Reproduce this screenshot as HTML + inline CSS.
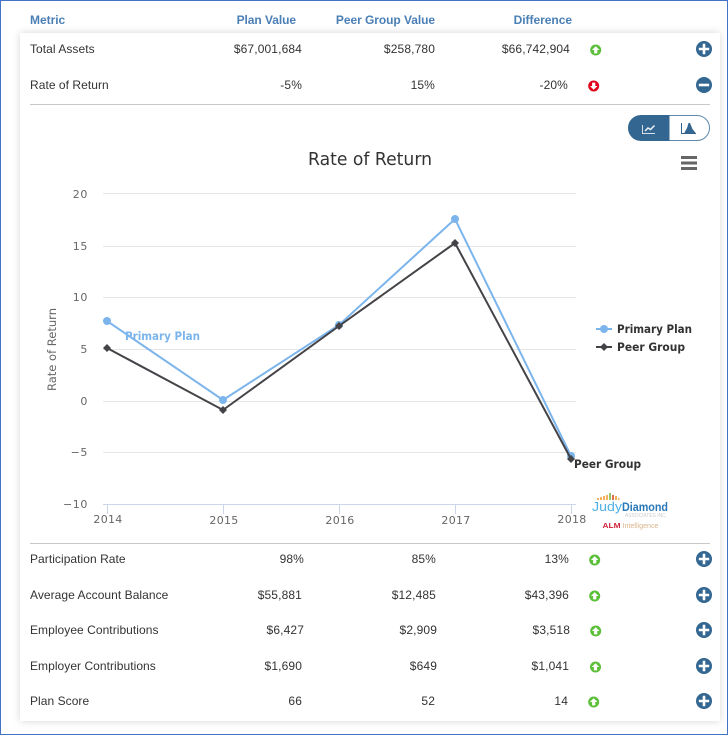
<!DOCTYPE html>
<html><head><meta charset="utf-8"><style>
html,body{margin:0;padding:0;background:#fff}
#p{position:relative;width:728px;height:735px;overflow:hidden;background:#fff;font-family:"Liberation Sans",Arial,sans-serif;font-size:12px;color:#333}
#b{position:absolute;left:0;top:0;width:726px;height:733px;border:1px solid #4472c4;}
#c{position:absolute;left:20px;top:33px;width:700px;height:688px;background:#fff;box-shadow:0 0 8px rgba(0,0,0,.16)}
.t{position:absolute;white-space:nowrap;line-height:14px;letter-spacing:.05px}
.r{text-align:right;letter-spacing:.13px}
.h{font-weight:bold;color:#4a7fb5;letter-spacing:-.03px}
svg{position:absolute;left:0;top:0}
</style></head><body><div id="p"><div id="b"></div><div id="c"></div>

<div class="t h" style="left:30px;top:13px">Metric</div>
<div class="t h r" style="right:432px;top:13px;letter-spacing:-.06px">Plan Value</div>
<div class="t h r" style="right:293px;top:13px;letter-spacing:-.06px">Peer Group Value</div>
<div class="t h r" style="right:156px;top:13px;letter-spacing:-.03px">Difference</div>

<div class="t" style="left:30px;top:42px">Total Assets</div>
<div class="t r" style="right:426px;top:42px">$67,001,684</div>
<div class="t r" style="right:293px;top:42px">$258,780</div>
<div class="t r" style="right:158px;top:42px">$66,742,904</div>

<div class="t" style="left:30px;top:78px">Rate of Return</div>
<div class="t r" style="right:426px;top:78px">-5%</div>
<div class="t r" style="right:293px;top:78px">15%</div>
<div class="t r" style="right:160px;top:78px">-20%</div>

<div class="t" style="left:30px;top:552px">Participation Rate</div>
<div class="t r" style="right:424px;top:552px">98%</div>
<div class="t r" style="right:292px;top:552px">85%</div>
<div class="t r" style="right:159px;top:552px">13%</div>

<div class="t" style="left:30px;top:588px">Average Account Balance</div>
<div class="t r" style="right:426px;top:588px">$55,881</div>
<div class="t r" style="right:292px;top:588px">$12,485</div>
<div class="t r" style="right:159px;top:588px">$43,396</div>

<div class="t" style="left:30px;top:623px">Employee Contributions</div>
<div class="t r" style="right:424px;top:623px">$6,427</div>
<div class="t r" style="right:291px;top:623px">$2,909</div>
<div class="t r" style="right:158px;top:623px">$3,518</div>

<div class="t" style="left:30px;top:659px">Employer Contributions</div>
<div class="t r" style="right:426px;top:659px">$1,690</div>
<div class="t r" style="right:291px;top:659px">$649</div>
<div class="t r" style="right:159px;top:659px">$1,041</div>

<div class="t" style="left:30px;top:694px">Plan Score</div>
<div class="t r" style="right:426px;top:694px">66</div>
<div class="t r" style="right:293px;top:694px">52</div>
<div class="t r" style="right:160px;top:694px">14</div>

<svg width="728" height="735" viewBox="0 0 728 735" font-family="'DejaVu Sans',sans-serif">
<defs>
<g id="plus"><circle r="8" fill="#336791"/><path d="M-5.200 0H5.200M0-5.200V5.200" stroke="#fff" stroke-width="2.600"/></g>
<g id="up"><circle r="5.500" fill="#5cbf3a"/><path d="M0-3.800L3.800 0H1.600V3.400H-1.600V0H-3.800Z" fill="#fff"/></g>
<g id="down"><circle r="5.500" fill="#e0001b"/><path d="M0 3.800L3.800 0H1.600V-3.400H-1.600V0H-3.800Z" fill="#fff"/></g>
</defs>
<path d="M30 104.500H710M30 543.500H710" stroke="#c8c8c8" stroke-width="1"/>

<use href="#up" x="595.700" y="50"/><use href="#down" x="593.700" y="86"/>
<use href="#up" x="594.700" y="560"/><use href="#up" x="594.700" y="596"/><use href="#up" x="595.700" y="631"/><use href="#up" x="595.500" y="667"/><use href="#up" x="593.700" y="702"/>
<use href="#plus" x="704" y="49"/>
<g transform="translate(704,85)"><circle r="8" fill="#336791"/><path d="M-5.200 0H5.200" stroke="#fff" stroke-width="2.600"/></g>
<use href="#plus" x="704" y="559"/><use href="#plus" x="704" y="595"/><use href="#plus" x="704" y="630"/><use href="#plus" x="704" y="666"/><use href="#plus" x="704" y="701"/>

<!-- toggle -->
<path d="M669 115.500H697A12.500 12.500 0 0 1 697 140.500H669Z" fill="#fff" stroke="#5f89ad"/>
<path d="M641 115.500H669V140.500H641A12.500 12.500 0 0 1 641 115.500Z" fill="#336791" stroke="#336791"/>
<path d="M642.500 125V133.500H655" fill="none" stroke="#fff" stroke-width="1" opacity=".8"/>
<path d="M645 131L648 128L650.500 129.500L654.500 125.500" fill="none" stroke="#fff" stroke-width="1.500" opacity=".9"/>
<path d="M681.500 123V133.500H696" fill="none" stroke="#336791" stroke-width="1"/>
<path d="M684 133.500L687 128L688.500 123H690L692.500 129L696 133.500Z" fill="#336791"/>

<!-- hamburger -->
<path d="M681 157.500H697M681 163H697M681 168.500H697" stroke="#666" stroke-width="3"/>

<text x="308" y="165" font-size="17.500" fill="#333" textLength="124" lengthAdjust="spacingAndGlyphs">Rate of Return</text>

<!-- grid -->
<path d="M103 193.500H576M103 246.500H576M103 297.500H576M103 349.500H576M103 401.500H576M103 452.500H576" stroke="#e6e6e6"/>
<path d="M103 504.500H576" stroke="#ccd6eb"/>
<path d="M107.500 505V514M223.500 505V514M339.500 505V514M455.500 505V514M571.500 505V514" stroke="#ccd6eb"/>

<g font-size="11" fill="#666" text-anchor="end" letter-spacing=".6">
<text x="88" y="198">20</text><text x="88" y="250">15</text><text x="88" y="301">10</text><text x="88" y="353">5</text><text x="88" y="405">0</text><text x="88" y="456">−5</text><text x="88" y="508">−10</text>
</g>
<g font-size="11" fill="#666" text-anchor="middle" letter-spacing=".3">
<text x="108" y="523">2014</text><text x="224" y="524">2015</text><text x="340" y="524">2016</text><text x="456" y="524">2017</text><text x="572" y="523">2018</text>
</g>
<text transform="translate(56,391) rotate(-90)" font-size="11.500" fill="#666" textLength="83" lengthAdjust="spacingAndGlyphs">Rate of Return</text>

<!-- series -->
<path d="M107 321L223 400L339 325L455 219L571 456" fill="none" stroke="#7cb5ec" stroke-width="2"/>
<g fill="#7cb5ec"><circle cx="107" cy="321" r="4"/><circle cx="223" cy="400" r="4"/><circle cx="339" cy="325" r="4"/><circle cx="455" cy="219" r="4"/><circle cx="571" cy="456" r="4"/></g>
<path d="M107 348L223 410L339 326L455 243L571 459" fill="none" stroke="#434348" stroke-width="2"/>
<g fill="#434348"><path d="M107 344l4 4-4 4-4-4Z"/><path d="M223 406l4 4-4 4-4-4Z"/><path d="M339 322l4 4-4 4-4-4Z"/><path d="M455 239l4 4-4 4-4-4Z"/><path d="M571 455l4 4-4 4-4-4Z"/></g>

<text x="125" y="340" font-size="11.500" font-weight="bold" fill="#7cb5ec" textLength="75" lengthAdjust="spacingAndGlyphs">Primary Plan</text>
<text x="574" y="468" font-size="11.500" font-weight="bold" fill="#333" textLength="67" lengthAdjust="spacingAndGlyphs">Peer Group</text>

<!-- legend -->
<path d="M596 329H612" stroke="#7cb5ec" stroke-width="2"/><circle cx="604" cy="329" r="4" fill="#7cb5ec"/>
<text x="617" y="333" font-size="11.500" font-weight="bold" fill="#333" textLength="75" lengthAdjust="spacingAndGlyphs">Primary Plan</text>
<path d="M596 347H612" stroke="#434348" stroke-width="2"/><path d="M604 343l4 4-4 4-4-4Z" fill="#434348"/>
<text x="617" y="351" font-size="11.500" font-weight="bold" fill="#333" textLength="68" lengthAdjust="spacingAndGlyphs">Peer Group</text>

<!-- logo -->
<g fill="#f0a848" opacity=".9"><rect x="597" y="498" width="2" height="2"/><rect x="600" y="497" width="2" height="3"/><rect x="603" y="496" width="2" height="4"/><rect x="606" y="495" width="2" height="5"/><rect x="609" y="493" width="2" height="7" fill="#8cbf5a"/><rect x="612" y="495" width="2" height="5" fill="#e2603a"/><rect x="615" y="496" width="2" height="4"/><rect x="618" y="498" width="1.500" height="2"/></g>
<text x="592" y="511" font-family="'Liberation Sans',sans-serif" font-size="13" fill="#4fb0e5" textLength="30" lengthAdjust="spacingAndGlyphs">Judy</text>
<text x="622" y="511" font-family="'Liberation Sans',sans-serif" font-size="11.500" font-weight="bold" fill="#2a78b8" textLength="46" lengthAdjust="spacingAndGlyphs">Diamond</text>
<text x="625" y="517" font-family="'Liberation Sans',sans-serif" font-size="5" fill="#ccc" textLength="42" lengthAdjust="spacingAndGlyphs">ASSOCIATES INC.</text>
<text x="602.500" y="528" font-family="'Liberation Sans',sans-serif" font-size="7" font-weight="bold" fill="#d2233c" textLength="18" lengthAdjust="spacingAndGlyphs">ALM</text>
<text x="622.500" y="528" font-family="'Liberation Sans',sans-serif" font-size="7" fill="#d9b48c" textLength="36" lengthAdjust="spacingAndGlyphs">Intelligence</text>
</svg>
</div></body></html>
